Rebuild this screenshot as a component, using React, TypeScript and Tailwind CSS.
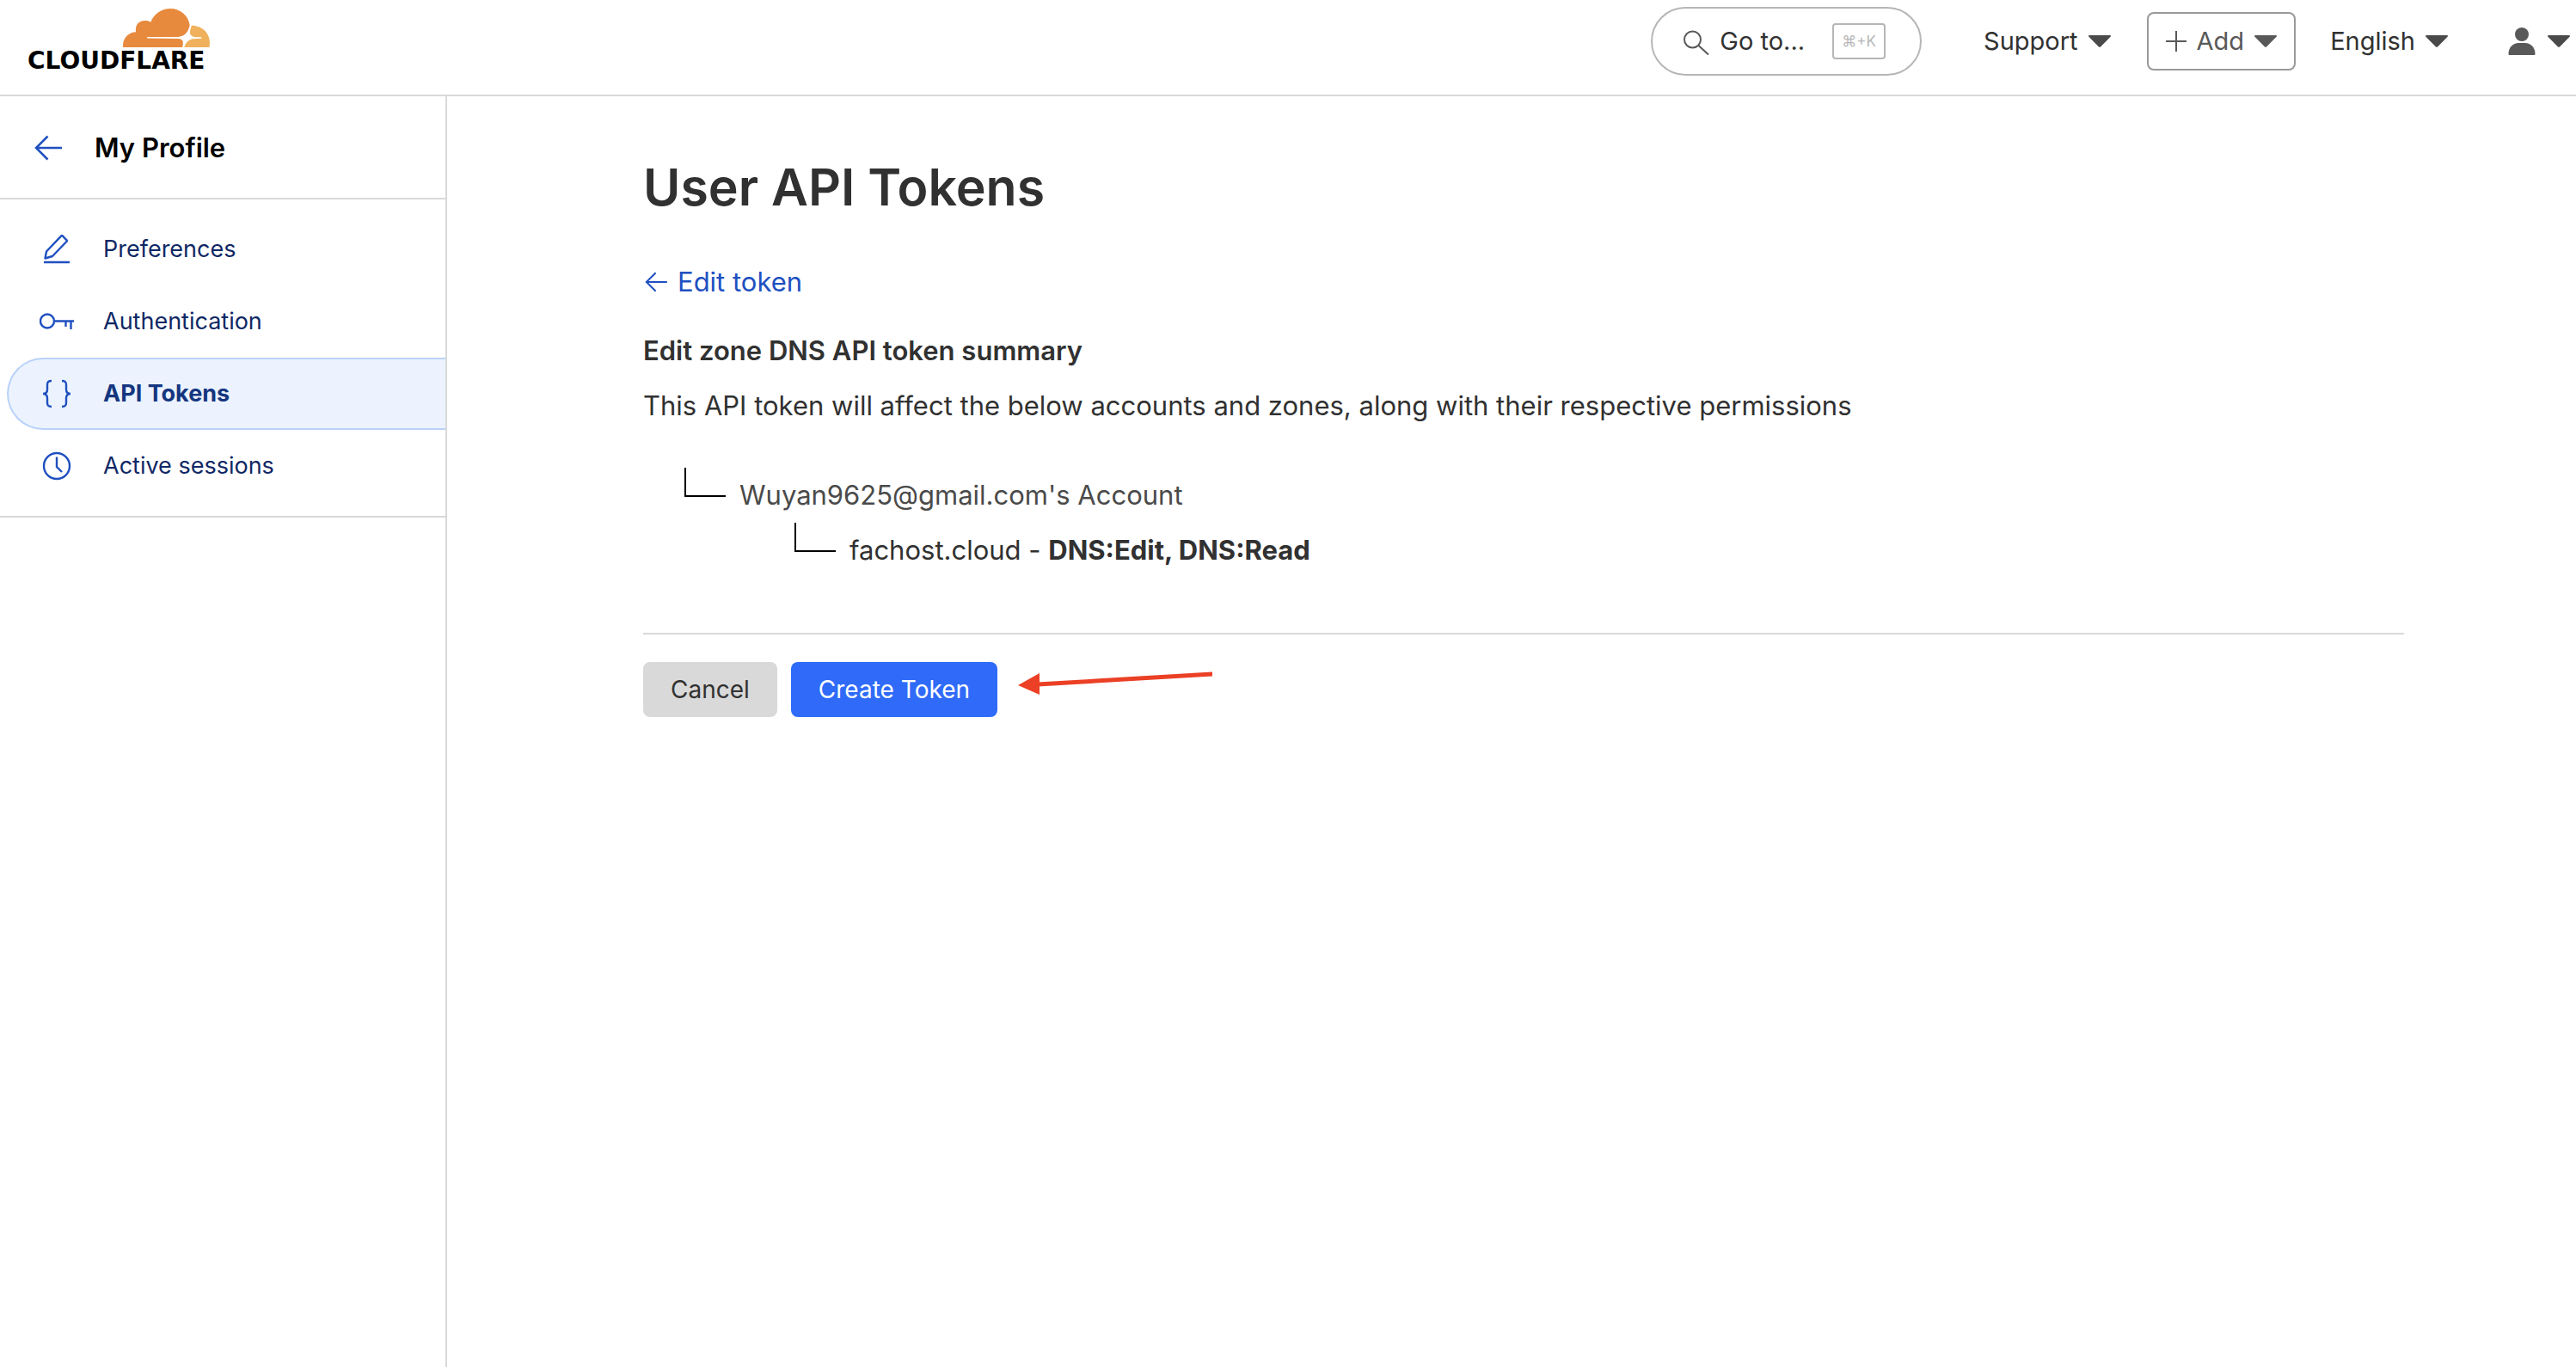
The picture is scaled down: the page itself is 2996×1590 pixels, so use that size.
import React from "react";

type IconProps = { className?: string };

function CloudLogo() {
  return (
    <svg viewBox="0 0 101 45" className="h-[45px] w-[101px] self-end" aria-hidden="true">
      <path
        fill="#e78a3e"
        d="M0 45V43C0 34 7 27.5 15 27.3C14 18 19 14 25.7 14C28.5 14 30.5 14.6 32.3 15.7C36 6 45 0 55 0C67 0 76 8 77.7 19.3C76 28 71 32.6 64 33H28.6C27.8 33 27.8 34.6 28.6 34.6L64.6 35C69 35.3 70.2 38 69.8 41L69.2 45Z"
      />
      <path
        fill="#efb15b"
        d="M79.8 19.7C92 19.5 101 28.5 101 39.7L100.5 45H71.2C73 40 76 36 81 35.2L91 34.7C91.7 34.5 91.7 33.4 91 33.2L83 33C79.5 32 77.5 30 78 26Z"
      />
    </svg>
  );
}

function ArrowLeft({ className }: IconProps) {
  return (
    <svg viewBox="0 0 32 30" className={className} fill="none" stroke="currentColor" strokeWidth="2.5" aria-hidden="true">
      <path d="M32 15H2M15.5 1.5L2 15L15.5 28.5" />
    </svg>
  );
}

function Caret({ className = "text-[#4a4a4a]" }: IconProps) {
  return (
    <svg viewBox="0 0 26 14" className={"h-[14px] w-[26px] shrink-0 " + className} aria-hidden="true">
      <path fill="currentColor" d="M1 0H25C26 0 26.3 1 25.6 1.7L14 13.4C13.4 14 12.6 14 12 13.4L0.4 1.7C-0.3 1 0 0 1 0Z" />
    </svg>
  );
}

function SearchIcon() {
  return (
    <svg viewBox="0 0 30 30" className="mt-1 h-[30px] w-[30px] shrink-0" fill="none" stroke="#595959" strokeWidth="2" aria-hidden="true">
      <circle cx="10.5" cy="11" r="9.5" />
      <path d="M17.5 18L29 28.5" />
    </svg>
  );
}

function PlusIcon() {
  return (
    <svg viewBox="0 0 24 24" className="h-6 w-6" stroke="#595959" strokeWidth="2" aria-hidden="true">
      <path d="M12 0V24M0 12H24" />
    </svg>
  );
}

function UserIcon() {
  return (
    <svg viewBox="0 0 32 32" className="h-8 w-8" fill="#595959" aria-hidden="true">
      <circle cx="16" cy="8" r="8" />
      <path d="M0.5 30.5C0.5 23 6 18 12 18H20C26 18 31.5 23 31.5 30.5C31.5 31.5 31 32 30 32H2C1 32 0.5 31.5 0.5 30.5Z" />
    </svg>
  );
}

function PencilIcon() {
  return (
    <svg viewBox="0 0 40 40" className="h-10 w-10" fill="none" stroke="#2050c0" strokeWidth="2.4" strokeLinejoin="round" aria-hidden="true">
      <path d="M6.5 30.5L8 22.5L25.5 4.2Q26 3.7 26.5 4.2L31.8 9.6Q32.2 10 31.8 10.5L15 28ZM5 35H35" />
    </svg>
  );
}

function KeyIcon() {
  return (
    <svg viewBox="0 0 40 40" className="h-10 w-10" fill="none" stroke="#2050c0" strokeWidth="2.4" aria-hidden="true">
      <circle cx="9" cy="19.5" r="8" />
      <path d="M17 19.5H40M30.5 19.5V26M36.5 19.5V29" />
    </svg>
  );
}

function BracesIcon() {
  return (
    <svg viewBox="0 0 40 40" className="h-10 w-10" fill="none" stroke="#2050c0" strokeWidth="2.4" aria-hidden="true">
      <path d="M14 5C10 5 9 6.5 9 9.5V15C9 18 7.5 20 4 20C7.5 20 9 22 9 25V30.5C9 33.5 10 35 14 35" />
      <path d="M26 5C30 5 31 6.5 31 9.5V15C31 18 32.5 20 36 20C32.5 20 31 22 31 25V30.5C31 33.5 30 35 26 35" />
    </svg>
  );
}

function ClockIcon() {
  return (
    <svg viewBox="0 0 40 40" className="h-10 w-10" fill="none" stroke="#2050c0" strokeWidth="2.4" aria-hidden="true">
      <circle cx="20" cy="20" r="15" />
      <path d="M20 9.5V21L26 27" />
    </svg>
  );
}

const navItems = [
  { label: "Preferences", Icon: PencilIcon, active: false },
  { label: "Authentication", Icon: KeyIcon, active: false },
  { label: "API Tokens", Icon: BracesIcon, active: true },
  { label: "Active sessions", Icon: ClockIcon, active: false },
];

function Header() {
  return (
    <header className="flex h-28 shrink-0 items-center justify-between border-b-2 border-[#d9d9d9] pr-[7px] pb-[14px]">
      <a href="#" aria-label="Cloudflare" className="flex w-[244px] flex-col pl-8 text-black">
        <CloudLogo />
        <span className="font-['DejaVu_Sans',sans-serif] text-[28px] leading-8 font-bold">CLOUDFLARE</span>
      </a>
      <div className="flex items-center text-[29px] leading-10 text-[#313131]">
        <button type="button" className="mr-[72px] flex h-20 items-center rounded-full border-2 border-[#b6b6b6] pr-10 pl-9">
          <SearchIcon />
          <span className="ml-3">Go to...</span>
          <kbd className="ml-8 flex h-[42px] w-[62px] items-center justify-center rounded-sm border-2 border-[#b6b6b6] font-['Inter',sans-serif] text-[17px] text-[#b6b6b6]">
            ⌘+K
          </kbd>
        </button>
        <button type="button" className="mr-[42px] flex items-center gap-3">
          Support
          <Caret />
        </button>
        <button type="button" className="mr-10 flex h-[68px] items-center gap-3 rounded-lg border-2 border-[#999999] px-5 text-[#595959]">
          <PlusIcon />
          Add
          <Caret className="text-[#595959]" />
        </button>
        <button type="button" className="mr-[70px] flex items-center gap-3">
          English
          <Caret />
        </button>
        <button type="button" aria-label="Account" className="flex items-center gap-[14px]">
          <UserIcon />
          <Caret />
        </button>
      </div>
    </header>
  );
}

function Sidebar() {
  return (
    <aside className="w-[520px] shrink-0 border-r-2 border-[#d9d9d9]">
      <div className="flex h-[120px] items-center border-b-2 border-[#d9d9d9] pt-0.5 pl-10">
        <a href="#" aria-label="Back" className="text-[#2050c0]">
          <ArrowLeft className="h-[30px] w-8" />
        </a>
        <h2 className="ml-[38px] text-[31px] leading-10 font-semibold text-black">My Profile</h2>
      </div>
      <nav className="border-b-2 border-[#d9d9d9] py-4 pl-2">
        {navItems.map(({ label, Icon, active }) => (
          <a
            key={label}
            href="#"
            className={
              active
                ? "flex h-[84px] items-center gap-[34px] rounded-l-full border-y-2 border-l-2 border-[#b9d2f9] bg-[#ecf3fe] pl-9 text-[27px] font-bold text-[#15367f]"
                : "flex h-[84px] items-center gap-[34px] border-l-2 border-transparent pl-9 text-[27px] text-[#0f2865]"
            }
          >
            <Icon />
            {label}
          </a>
        ))}
      </nav>
    </aside>
  );
}

function Branch() {
  return <span className="h-[34px] w-12 self-start border-b-2 border-l-2 border-black" />;
}

function PointerArrow() {
  return (
    <svg viewBox="0 0 228 30" className="ml-6 h-[30px] w-[228px]" fill="#eb4025" aria-hidden="true">
      <path d="M0 17L25 3V28Z" />
      <path d="M23 13.5L226 1.5V6.5L23 18.5Z" />
    </svg>
  );
}

export default function App() {
  return (
    <div className="flex min-h-screen flex-col bg-white font-['Inter',sans-serif] text-[#313131]">
      <Header />
      <div className="flex grow">
        <Sidebar />
        <main className="grow pt-[66px] pr-[200px] pl-[228px] text-[31px] leading-[48px]">
          <h1 className="text-[59px] leading-20 font-semibold">User API Tokens</h1>
          <a href="#" className="mt-[46px] flex items-center gap-3 text-[#2050c0]">
            <ArrowLeft className="ml-[2px] h-6 w-[26px]" />
            Edit token
          </a>
          <h2 className="mt-8 font-semibold">Edit zone DNS API token summary</h2>
          <p className="mt-4">
            This API token will affect the below accounts and zones, along with their respective permissions
          </p>
          <ul className="mt-12 pl-12">
            <li>
              <div className="flex h-16 items-center gap-4 text-[#4a4a4a]">
                <Branch />
                Wuyan9625@gmail.com's Account
              </div>
              <ul className="pl-32">
                <li className="flex h-16 items-center gap-4">
                  <Branch />
                  <span>
                    fachost.cloud - <strong className="font-bold">DNS:Edit, DNS:Read</strong>
                  </span>
                </li>
              </ul>
            </li>
          </ul>
          <div className="mt-16 flex items-start border-t-2 border-[#d9d9d9] pt-8">
            <button type="button" className="h-16 rounded-lg bg-[#d9d9d9] px-8 text-[28px]">
              Cancel
            </button>
            <button type="button" className="ml-4 h-16 rounded-lg bg-[#2f6bf8] px-8 text-[28px] text-white">
              Create Token
            </button>
            <span className="pt-[10px]">
              <PointerArrow />
            </span>
          </div>
        </main>
      </div>
    </div>
  );
}
